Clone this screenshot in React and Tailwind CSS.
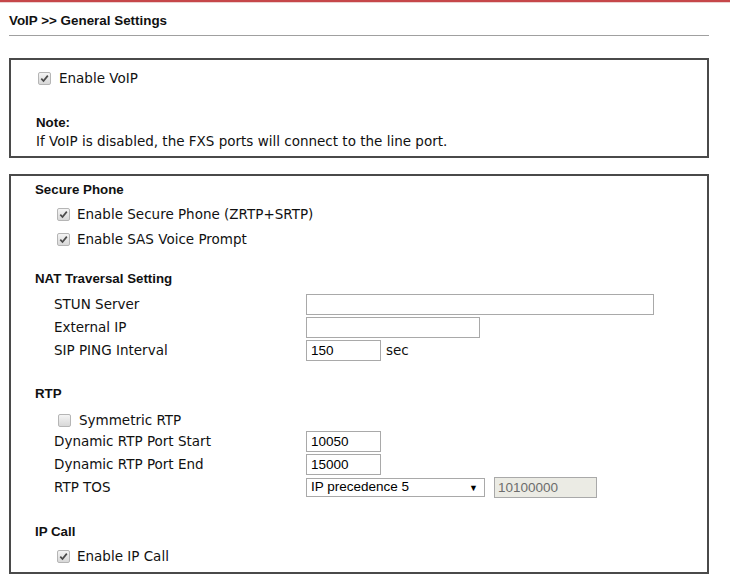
const Check = ({ checked, className = "" }) => (
  <span
    className={`inline-flex items-center justify-center w-[13px] h-[13px] border border-[#b5b5b5] rounded-[2px] bg-gradient-to-b from-[#f4f4f4] to-[#d8d8d8] ${className}`}
  >
    {checked && (
      <svg width="9" height="9" viewBox="0 0 9 9">
        <path d="M1.3 4.6 L3.5 7 L7.8 1.6" fill="none" stroke="#4a4a4a" strokeWidth="1.7" />
      </svg>
    )}
  </span>
);

const label = "font-['DejaVu_Sans',Verdana,sans-serif] text-[13.5px] text-[#111]";
const heading = "font-['Liberation_Sans',Arial,sans-serif] font-bold text-[13.3px] text-[#111] h-4 leading-4";
const input =
  "h-[21px] border border-[#a9a9a9] bg-white px-1 font-['Liberation_Sans',Arial,sans-serif] text-[13.5px] text-black leading-[19px] outline-none";

const CheckRow = ({ checked, text, h = "h-[25px]", className = "" }) => (
  <div className={`flex items-center ${h} ${className}`}>
    <Check checked={checked} />
    <span className={`${label} ml-[7px]`}>{text}</span>
  </div>
);

const FieldRow = ({ name, children }) => (
  <div className="flex items-center h-[23px] pl-[43px]">
    <span className={`${label} w-[252px]`}>{name}</span>
    <div className="flex items-center">{children}</div>
  </div>
);

export default function App() {
  return (
    <div className="min-h-[583px] bg-white">
      <div className="h-[2px] bg-[#c6474a]" />
      <div className="h-[1px] bg-[#ecd2d2]" />
      <div className="px-[9px] w-[718px]">
        <div className="pt-[10px] h-[32px]">
          <h1 className="font-['Liberation_Sans',Arial,sans-serif] font-bold text-[13.4px] leading-4 text-[#111]">
            VoIP &gt;&gt; General Settings
          </h1>
        </div>
        <div className="h-[2px] border-t border-[#a0a0a0]" />

        <div className="mt-[21px] border-2 border-[#4a4a4a] pt-[8px] pb-[7px] pl-[25px]">
          <CheckRow checked text="Enable VoIP" h="h-5" className="pl-[2px] [&>span:last-child]:ml-[8px]" />
          <div className={`${heading} mt-[27px]`}>Note:</div>
          <div className={`${label} h-4 leading-4 mt-[2px]`}>
            If VoIP is disabled, the FXS ports will connect to the line port.
          </div>
        </div>

        <div className="mt-[16px] border-2 border-[#4a4a4a] pt-[6px] pb-[6px]">
          <div className="pl-[24px]">
            <div className={heading}>Secure Phone</div>
            <div className="pl-[22px] mt-[4px]">
              <CheckRow checked text="Enable Secure Phone (ZRTP+SRTP)" />
              <CheckRow checked text="Enable SAS Voice Prompt" />
            </div>
            <div className={`${heading} mt-[19px]`}>NAT Traversal Setting</div>
          </div>
          <div className="mt-[6px]">
            <FieldRow name="STUN Server">
              <input className={`${input} w-[348px]`} defaultValue="" />
            </FieldRow>
            <FieldRow name="External IP">
              <input className={`${input} w-[174px]`} defaultValue="" />
            </FieldRow>
            <FieldRow name="SIP PING Interval">
              <input className={`${input} w-[75px]`} defaultValue="150" />
              <span className={`${label} ml-[5px]`}>sec</span>
            </FieldRow>
          </div>

          <div className="pl-[24px] mt-[24px]">
            <div className={heading}>RTP</div>
            <CheckRow text="Symmetric RTP" h="h-[19px]" className="mt-[9px] pl-[23px] [&>span:last-child]:ml-[8px]" />
          </div>
          <FieldRow name="Dynamic RTP Port Start">
            <input className={`${input} w-[75px]`} defaultValue="10050" />
          </FieldRow>
          <FieldRow name="Dynamic RTP Port End">
            <input className={`${input} w-[75px]`} defaultValue="15000" />
          </FieldRow>
          <FieldRow name="RTP TOS">
            <div className="relative w-[179px] h-[19px] border border-[#a9a9a9] bg-white flex items-center pl-[4px] font-['Liberation_Sans',Arial,sans-serif] text-[13.5px] text-black">
              IP precedence 5
              <span className="absolute right-[6px] top-[1px] text-[9px] leading-[17px] text-black">▼</span>
            </div>
            <div className="ml-[9px] w-[103px] h-[21px] border border-[#a9a9a9] bg-[#ebebe4] px-[3px] font-['Liberation_Sans',Arial,sans-serif] text-[13.5px] leading-[19px] text-[#6d6d6d]">
              10100000
            </div>
          </FieldRow>

          <div className="pl-[24px] mt-[25px]">
            <div className={heading}>IP Call</div>
            <CheckRow checked text="Enable IP Call" h="h-5" className="mt-[6px] pl-[22px]" />
          </div>
        </div>
      </div>
    </div>
  );
}
